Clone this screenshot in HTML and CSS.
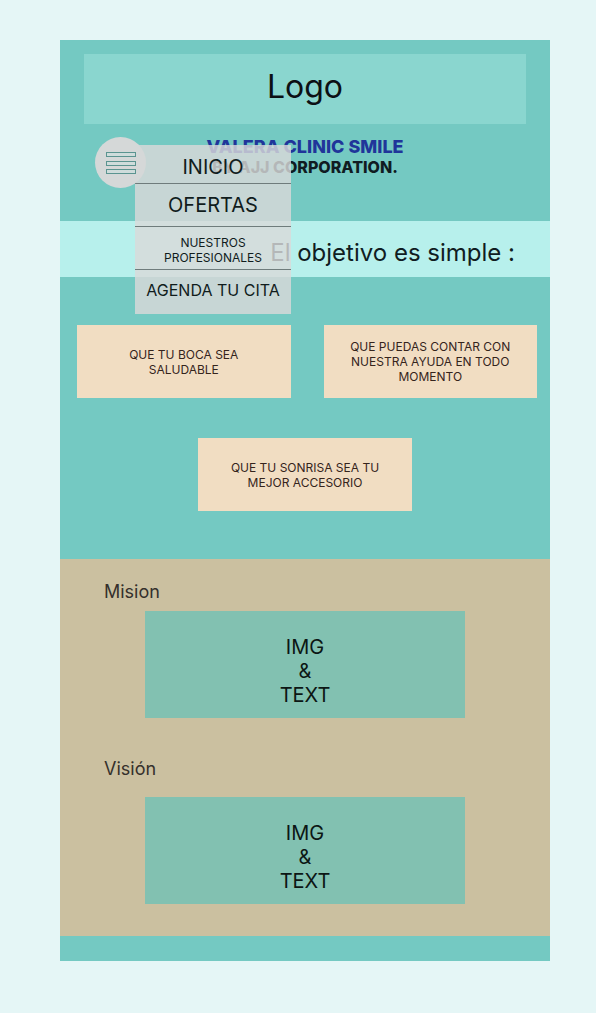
FILE: index.html
```html
<!DOCTYPE html>
<html lang="es">
<head>
<meta charset="utf-8">
<meta name="viewport" content="width=device-width, initial-scale=1">
<title>Valera Clinic Smile</title>
<link rel="stylesheet" href="styles.css">
</head>
<body>
<div class="page">
  <header class="header">
    <div class="logo">Logo</div>
    <div class="bar">
      <nav class="nav" aria-label="Principal">
        <button class="menu-button" type="button" aria-label="Menú" aria-expanded="true" aria-controls="menu">
          <svg class="menu-icon" viewBox="0 0 30 24" aria-hidden="true">
            <rect x="0.5" y="1.5" width="29" height="4"/>
            <rect x="0.5" y="10.5" width="29" height="4"/>
            <rect x="0.5" y="18.5" width="29" height="4"/>
          </svg>
        </button>
        <ul class="menu" id="menu">
          <li class="menu-item"><a class="menu-link" href="#inicio">INICIO</a></li>
          <li class="menu-item"><a class="menu-link" href="#ofertas">OFERTAS</a></li>
          <li class="menu-item"><a class="menu-link menu-link-small" href="#profesionales">NUESTROS PROFESIONALES</a></li>
          <li class="menu-item"><a class="menu-link menu-link-medium" href="#cita">AGENDA TU CITA</a></li>
        </ul>
      </nav>
      <div class="brand">
        <h1 class="brand-name">VALERA CLINIC SMILE</h1>
        <p class="brand-owner">BY AJJ CORPORATION.</p>
      </div>
    </div>
  </header>
  <main>
    <h2 class="banner">El objetivo es simple :</h2>
    <section class="goals">
      <p class="goal">QUE TU BOCA SEA SALUDABLE</p>
      <p class="goal">QUE PUEDAS CONTAR CON NUESTRA AYUDA EN TODO MOMENTO</p>
      <p class="goal goal-wide">QUE TU SONRISA SEA TU MEJOR ACCESORIO</p>
    </section>
    <div class="about">
      <section>
        <h2 class="about-title">Mision</h2>
        <div class="about-box">IMG<br>&amp;<br>TEXT</div>
      </section>
      <section>
        <h2 class="about-title about-title-spaced">Visión</h2>
        <div class="about-box">IMG<br>&amp;<br>TEXT</div>
      </section>
    </div>
  </main>
  <footer class="footer"></footer>
</div>
</body>
</html>
```
FILE: styles.css
```css
* {
  box-sizing: border-box;
}

body {
  margin: 0;
  padding: 40px 46px 52px 60px;
  background: #e5f6f6;
  color: #101c22;
  font-family: Inter, "Liberation Sans", sans-serif;
}

h1, h2, p, ul {
  margin: 0;
  padding: 0;
}

.page {
  background: #74c9c2;
}

.header {
  padding: 14px 24px 32px;
}

.logo {
  padding: 13px 0 17px;
  background: #8ad6cf;
  color: #0c1014;
  font-size: 32px;
  line-height: 40px;
  text-align: center;
}

.bar {
  display: grid;
  grid-template-columns: 52px 1fr 52px;
  margin-top: 13px;
  padding: 0 11px 1px;
}

.nav {
  position: relative;
}

.menu-button {
  display: flex;
  align-items: center;
  justify-content: center;
  position: relative;
  z-index: 2;
  width: 51px;
  height: 51px;
  padding: 0;
  border: 0;
  border-radius: 50%;
  background: #d5d8d8;
}

.menu-icon {
  width: 30px;
  height: 24px;
  fill: #cfdcdb;
  stroke: #5b9490;
  stroke-width: 1;
}

.menu {
  position: absolute;
  z-index: 1;
  top: 8px;
  left: 40px;
  width: 156px;
  background: rgba(217, 217, 217, 0.82);
  list-style: none;
}

.menu-item {
  border-bottom: 1px solid #6f7c7c;
}

.menu-item:last-child {
  border-bottom: 0;
}

.menu-link {
  display: flex;
  align-items: center;
  justify-content: center;
  height: 42px;
  color: #101c1c;
  font-size: 20px;
  line-height: 24px;
  text-align: center;
  text-decoration: none;
}

.menu-item:first-child .menu-link {
  height: 38px;
  padding-top: 6px;
}

.menu-link-small {
  padding-top: 4px;
  font-size: 12px;
  line-height: 15px;
}

.menu-link-medium {
  height: 44px;
  padding-bottom: 4px;
  font-size: 16px;
}

.brand {
  text-align: center;
}

.brand-name {
  color: #20359a;
  font-size: 18px;
  font-weight: 800;
  line-height: 20px;
}

.brand-owner {
  font-size: 16px;
  font-weight: 800;
  line-height: 20px;
}

.banner {
  padding: 17px 35px 9px;
  background: #b7f0ec;
  font-size: 24px;
  font-weight: 400;
  line-height: 30px;
  text-align: right;
}

.goals {
  display: grid;
  grid-template-columns: 1fr 1fr;
  gap: 40px 33px;
  padding: 48px 13px 48px 17px;
}

.goal {
  display: flex;
  align-items: center;
  justify-content: center;
  min-height: 73px;
  padding: 8px 20px;
  background: #f1ddc2;
  color: #35241c;
  font-size: 12px;
  line-height: 15px;
  text-align: center;
}

.goal-wide {
  grid-column: 1 / -1;
  justify-self: center;
  width: 214px;
  margin-right: 4px;
  padding: 8px 30px;
}

.about {
  display: grid;
  gap: 40px;
  padding: 22px 85px 32px;
  background: #cbc0a0;
}

.about-title {
  margin: 0 0 8px -41px;
  color: #35302c;
  font-size: 18px;
  font-weight: 400;
  line-height: 22px;
}

.about-title-spaced {
  margin-bottom: 17px;
}

.about-box {
  padding: 24px 0 11px;
  background: #82c1b1;
  color: #0c1614;
  font-size: 20px;
  line-height: 24px;
  text-align: center;
}

.footer {
  height: 25px;
}
```
